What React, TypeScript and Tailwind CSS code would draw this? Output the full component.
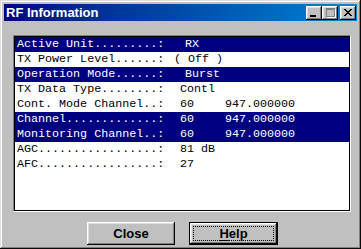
const rows = [
  { label: "Active Unit.........:", value: "RX", pad: "ml-[5px]", hl: true },
  { label: "TX Power Level......:", value: "( Off )", pad: "ml-[-6px]", hl: false },
  { label: "Operation Mode......:", value: "Burst", pad: "ml-[5px]", hl: true },
  { label: "TX Data Type........:", value: "Contl", pad: "", hl: false },
  { label: "Cont. Mode Channel..:", value: "60", freq: "947.000000", pad: "", hl: false },
  { label: "Channel.............:", value: "60", freq: "947.000000", pad: "", hl: true },
  { label: "Monitoring Channel..:", value: "60", freq: "947.000000", pad: "", hl: true },
  { label: "AGC.................:", value: "81 dB", pad: "", hl: false },
  { label: "AFC.................:", value: "27", pad: "", hl: false },
];

const raised =
  "shadow-[inset_-1px_-1px_#0a0a0a,inset_1px_1px_#ffffff,inset_-2px_-2px_#808080,inset_2px_2px_#dfdfdf]";

const TitleButton = ({ children, className = "" }: { children: React.ReactNode; className?: string }) => (
  <div className={`flex h-[14px] w-[16px] items-center justify-center bg-[#c0c0c0] ${raised} ${className}`}>
    {children}
  </div>
);

export default function App() {
  return (
    <div
      className="flex h-[249px] w-[361px] flex-col bg-[#c0c0c0] p-[4px] shadow-[inset_-1px_-1px_#0a0a0a,inset_1px_1px_#dfdfdf,inset_-2px_-2px_#808080,inset_2px_2px_#ffffff]"
      style={{ fontFamily: '"Liberation Sans", Arial, sans-serif' }}
    >
      <div className="flex h-[17px] items-center justify-between bg-gradient-to-r from-[#000080] to-[#1084d0] pl-[2px] pr-[1px]">
        <span className="text-[13px] font-bold leading-none text-white">RF Information</span>
        <div className="flex items-center">
          <TitleButton>
            <div className="mt-[7px] ml-[-2px] h-[2px] w-[6px] bg-black" />
          </TitleButton>
          <TitleButton>
            <div className="h-[9px] w-[9px] border border-t-2 border-[#808080] shadow-[1px_1px_#ffffff]" />
          </TitleButton>
          <TitleButton className="ml-[2px]">
            <svg width="8" height="7" viewBox="0 0 8 7" shapeRendering="crispEdges">
              <path d="M0 0h2v1h-2zM6 0h2v1h-2zM1 1h2v1h-2zM5 1h2v1h-2zM2 2h4v1h-4zM3 3h2v1h-2zM2 4h4v1h-4zM1 5h2v1h-2zM5 5h2v1h-2zM0 6h2v1h-2zM6 6h2v1h-2z" fill="#000" />
            </svg>
          </TitleButton>
        </div>
      </div>

      <div className="ml-[9px] mt-[14px] h-[177px] w-[338px] border-t border-l border-t-[#808080] border-l-[#808080] border-b border-r border-b-white border-r-white">
        <div
          className="flex h-full flex-col border border-black bg-white text-[11.7px] leading-none"
          style={{ fontFamily: '"Liberation Mono", "Courier New", monospace' }}
        >
          {rows.map((r) => (
            <div
              key={r.label}
              className={`flex h-[15px] items-center whitespace-pre pl-[2px] ${r.hl ? "bg-[#000080] text-white" : "text-black"}`}
            >
              <span className="w-[163px]">{r.label}</span>
              <span className={`${r.pad} ${r.freq ? "w-[45px]" : ""}`}>{r.value}</span>
              {r.freq && <span>{r.freq}</span>}
            </div>
          ))}
        </div>
      </div>

      <div className="mt-[10px] flex gap-[14px] pl-[83px]">
        <button className={`flex h-[23px] w-[88px] items-center justify-center bg-[#c0c0c0] text-[13px] font-bold text-black ${raised}`}>
          Close
        </button>
        <button className="h-[23px] w-[89px] border border-black bg-[#c0c0c0] p-0">
          <div className={`flex h-full w-full items-center justify-center p-[3px] ${raised}`}>
            <div className="flex h-full w-full items-center justify-center border border-dotted border-black text-[13px] font-bold text-black">
              <span className="underline underline-offset-2">H</span>elp
            </div>
          </div>
        </button>
      </div>
    </div>
  );
}
